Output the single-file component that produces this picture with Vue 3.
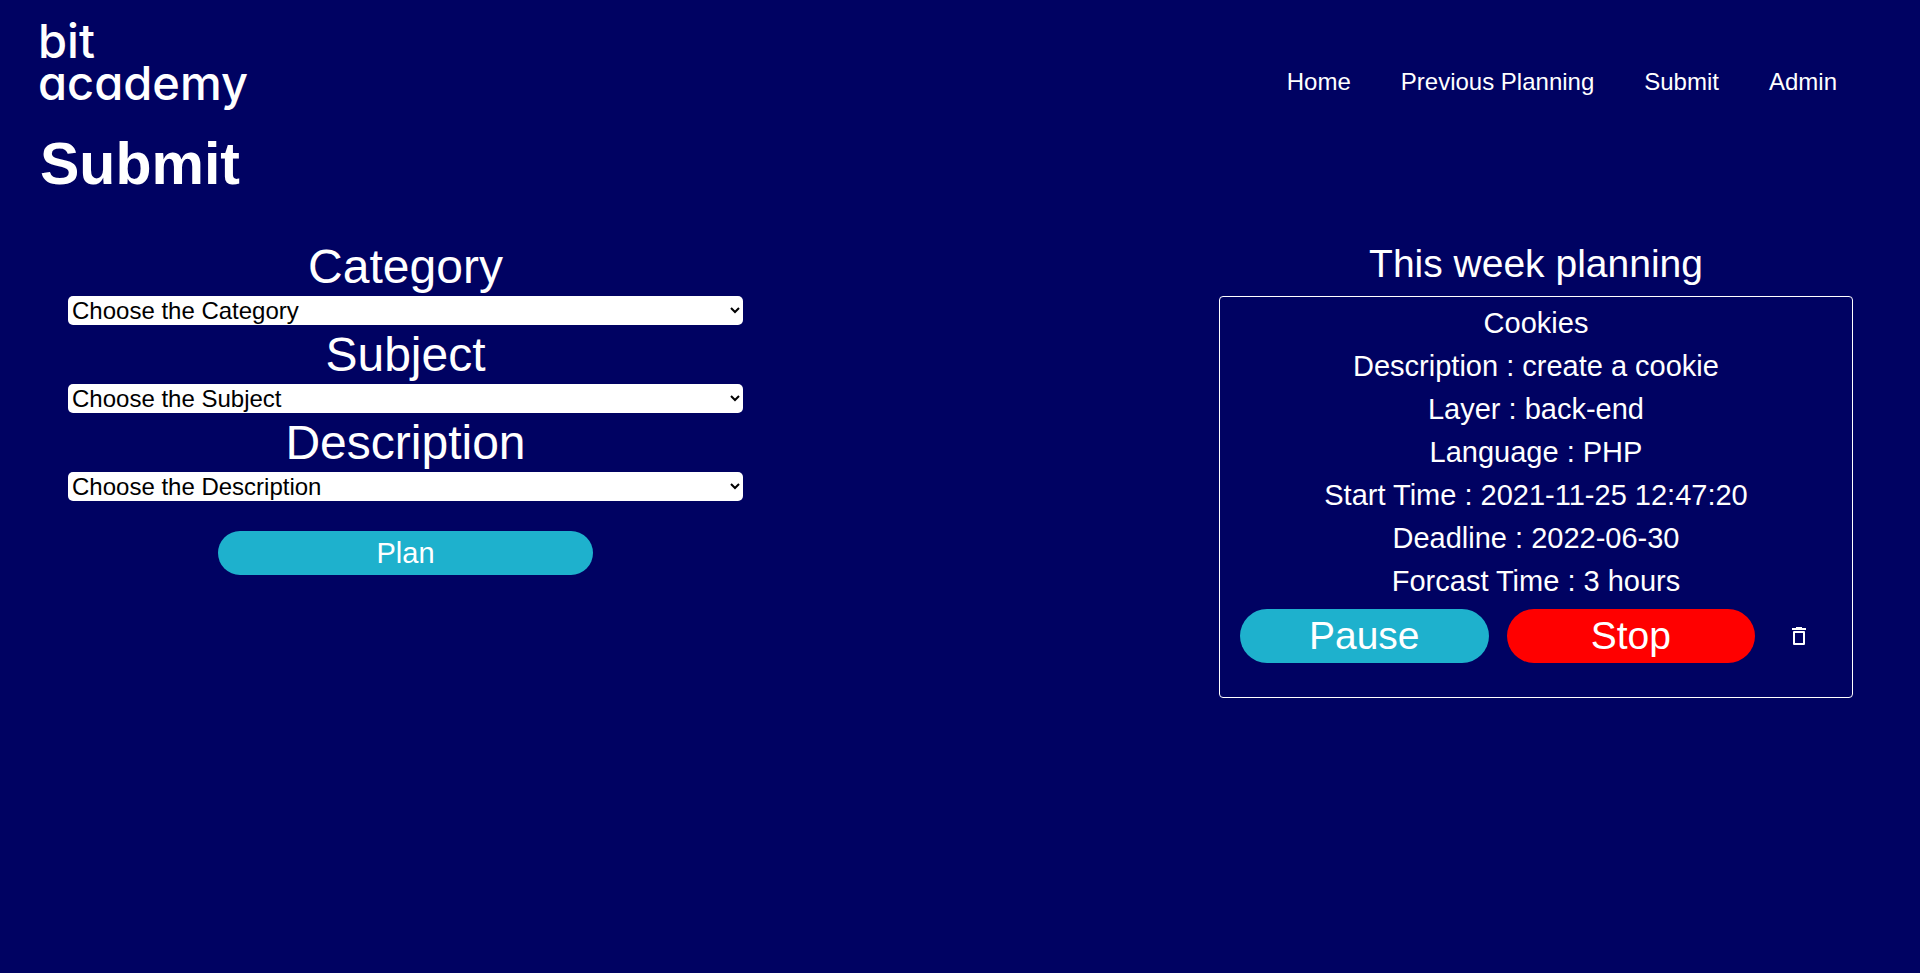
<script setup>
import { ref } from 'vue'

const links = ['Home', 'Previous Planning', 'Submit', 'Admin']
const fields = ref([
  { id: 'category', label: 'Category', placeholder: 'Choose the Category', value: '' },
  { id: 'subject', label: 'Subject', placeholder: 'Choose the Subject', value: '' },
  { id: 'description', label: 'Description', placeholder: 'Choose the Description', value: '' },
])
const task = [
  'Cookies',
  'Description : create a cookie',
  'Layer : back-end',
  'Language : PHP',
  'Start Time : 2021-11-25 12:47:20',
  'Deadline : 2022-06-30',
  'Forcast Time : 3 hours',
]
</script>

<template>
  <div class="page">
    <header class="header">
      <a class="logo" href="#">bit<br />academy</a>
      <nav class="nav">
        <a v-for="link in links" :key="link" href="#">{{ link }}</a>
      </nav>
    </header>

    <h1 class="title">Submit</h1>

    <main class="content">
      <form class="form" @submit.prevent>
        <div v-for="f in fields" :key="f.id" class="field">
          <label :for="f.id">{{ f.label }}</label>
          <select :id="f.id" v-model="f.value">
            <option value="">{{ f.placeholder }}</option>
          </select>
        </div>
        <button type="submit" class="pill plan">Plan</button>
      </form>

      <section class="planning">
        <h2>This week planning</h2>
        <article class="card">
          <p v-for="line in task" :key="line">{{ line }}</p>
          <div class="actions">
            <button type="button" class="pill">Pause</button>
            <button type="button" class="pill stop">Stop</button>
            <button type="button" class="trash" aria-label="Delete">
              <svg width="16" height="18" viewBox="0 0 16 18">
                <path d="M1 1H5V0H11V1H15V3H1Z" fill="#fff" />
                <path d="M3 5H13V17H3Z" fill="none" stroke="#fff" stroke-width="2" stroke-linejoin="round" />
              </svg>
            </button>
          </div>
        </article>
      </section>
    </main>
  </div>
</template>

<style>
body {
  background: #000262;
}
</style>

<style scoped>
.page {
  min-height: 100vh;
  box-sizing: border-box;
  color: #fff;
  font-family: "Liberation Sans", Arial, sans-serif;
}
.header {
  display: flex;
  justify-content: space-between;
  align-items: flex-end;
  padding: 20px 83px 0 38px;
}
.header a {
  color: #fff;
  text-decoration: none;
}
.logo {
  font: 500 47px/42px Inter, sans-serif;
  font-feature-settings: "cv11";
}
.nav {
  display: flex;
  gap: 50px;
  padding-bottom: 8px;
  font-size: 24px;
  line-height: 28px;
}
.title {
  margin: 25px 40px 0;
  font-size: 59px;
  line-height: 70px;
}
.content {
  display: flex;
  justify-content: space-between;
  align-items: flex-start;
  gap: 40px;
  padding: 38px 67px 0 68px;
}
.form {
  display: flex;
  flex-direction: column;
  flex: 0 1 675px;
}
.field {
  display: flex;
  flex-direction: column;
}
.field label {
  font-size: 48px;
  line-height: 59px;
  text-align: center;
}
.field select {
  height: 29px;
  padding: 0;
  border: 0;
  border-radius: 5px;
  background-color: #fff;
  color: #000;
  font-family: inherit;
  font-size: 24px;
}
.pill {
  flex: 1;
  padding: 0;
  border: 0;
  border-radius: 27px;
  background: #1eb1cd;
  color: #fff;
  font-family: inherit;
  font-size: 39px;
  line-height: 54px;
}
.plan {
  flex: none;
  width: 375px;
  margin: 30px auto 0;
  font-size: 29px;
  line-height: 44px;
}
.stop {
  background: #f00;
}
.planning {
  flex: 0 1 634px;
  text-align: center;
}
.planning h2 {
  margin: 0 0 6px;
  font-size: 39px;
  font-weight: 400;
  line-height: 53px;
}
.card {
  padding: 5px 20px 34px;
  border: 1px solid #fff;
  border-radius: 4px;
}
.card p {
  margin: 0;
  font-size: 29px;
  line-height: 43px;
}
.actions {
  display: flex;
  gap: 18px;
  padding-top: 6px;
}
.trash {
  display: flex;
  align-items: center;
  justify-content: center;
  width: 52px;
  margin-right: 7px;
  padding: 0;
  border: 0;
  background: none;
}
</style>
